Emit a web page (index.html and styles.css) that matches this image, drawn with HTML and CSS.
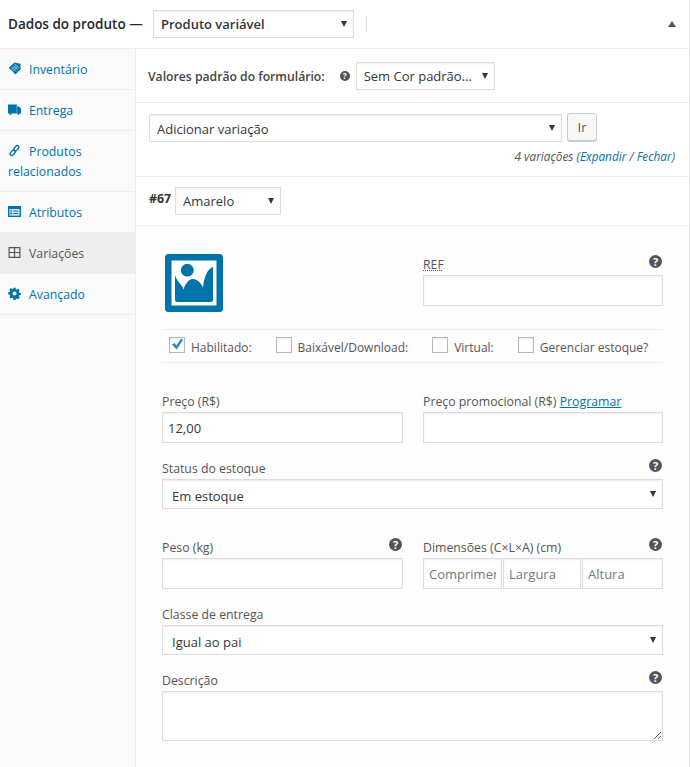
FILE: index.html
```html
<!DOCTYPE html>
<html lang="pt-BR">
<head>
    <meta charset="UTF-8">
    <meta name="viewport" content="width=device-width, initial-scale=1.0">
    <title>Dados do produto</title>
    <link rel="stylesheet" href="styles.css">
</head>
<body>
    <div class="panel">
        <header class="panel-head">
            <h2 class="panel-title">Dados do produto —</h2>
            <div class="select-wrap type-select">
                <select class="select-strong"><option>Produto variável</option></select>
            </div>
            <span class="head-divider"></span>
            <span class="collapse-arrow"></span>
        </header>

        <div class="product-data">
            <!-- Tabs -->
            <ul class="tabs">
                <li><a href="#">
                    <svg class="tab-icon" viewBox="0 0 13 13"><path d="M6.6 0.6l5.8 1.2 0.2 5.4-5.2 5.2-6.6-6.6z" fill="#0073aa"/><path d="M3.600 5l4.600 4.600M5.200 3.400l4.600 4.600M6.800 2l4 4M8.200 3.200l-5 5M9.600 4.600l-5 5" stroke="#cfe3ee" stroke-width="0.7" fill="none"/></svg>Inventário</a></li>
                <li><a href="#">
                    <svg class="tab-icon" viewBox="0 0 13 13"><path d="M0 1.400h8.800v9H0zM9.100 3.400h2.100L13 5.800v4.600H9.100z" fill="#0073aa"/><circle cx="2.6" cy="10.8" r="1.1" fill="#0073aa"/><circle cx="10.4" cy="10.8" r="1.1" fill="#0073aa"/></svg>Entrega</a></li>
                <li><a href="#">
                    <svg class="tab-icon" viewBox="0 0 13 13"><g fill="none" stroke="#0073aa" stroke-width="1.4"><rect x="6.6" y="1.2" width="3.4" height="6" rx="1.7" transform="rotate(42 8.3 4.2)"/><rect x="3" y="5.8" width="3.4" height="6" rx="1.7" transform="rotate(42 4.7 8.8)"/></g></svg>Produtos relacionados</a></li>
                <li><a href="#">
                    <svg class="tab-icon" viewBox="0 0 13 13"><path d="M0 1h13v11H0z" fill="#0073aa"/><path d="M1.400 4h10.200v6.600H1.400z" fill="#d8e8f1"/><path d="M2.200 5.200h2v1.400h-2zM2.200 7.800h2v1.400h-2zM5.200 5.400h5.400v1H5.200zM5.200 8h5.400v1H5.200z" fill="#0073aa"/></svg>Atributos</a></li>
                <li class="active"><a href="#">
                    <svg class="tab-icon" viewBox="0 0 13 13"><path d="M1.100 1.600h10.800v9.800H1.100zM6.500 1.600v9.800M1.100 6.500h10.800" fill="none" stroke="#555" stroke-width="1.2"/></svg>Variações</a></li>
                <li><a href="#">
                    <svg class="tab-icon" viewBox="0 0 13 13"><path d="M5.300 0.800h2.400l0.300 1.600 1.100 0.500 1.400-0.900 1.700 1.700-0.900 1.400 0.500 1.100 1.600 0.300v2.400l-1.600 0.300-0.500 1.100 0.900 1.400-1.700 1.700-1.400-0.900-1.100 0.500-0.300 1.600H5.300L5 12.200l-1.100-0.500-1.400 0.900-1.700-1.700 0.900-1.400L1.200 8.400-0.400 8.100V5.700L1.200 5.400l0.500-1.100-0.900-1.400 1.700-1.700 1.400 0.900L5 2.400z" transform="translate(0.6 0) scale(0.91)" fill="#0073aa"/><circle cx="6.5" cy="6.4" r="2" fill="#fafafa"/></svg>Avançado</a></li>
            </ul>

            <div class="main">
                <div class="row row-defaults">
                    <strong class="defaults-label">Valores padrão do formulário:</strong>
                    <span class="help help-small">?</span>
                    <div class="select-wrap defaults-select">
                        <select><option>Sem Cor padrão…</option></select>
                    </div>
                </div>

                <div class="row row-add">
                    <div class="add-line">
                        <div class="select-wrap add-select">
                            <select><option>Adicionar variação</option></select>
                        </div>
                        <button class="btn" type="button">Ir</button>
                    </div>
                    <p class="var-count">4 variações (<a href="#">Expandir</a> / <a href="#">Fechar</a>)</p>
                </div>

                <div class="row row-variation">
                    <strong class="var-id">#67</strong>
                    <div class="select-wrap color-select">
                        <select><option>Amarelo</option></select>
                    </div>
                </div>

                <div class="variation">
                    <div class="grid image-grid">
                        <svg class="thumb" viewBox="0 0 58 58">
                            <rect width="58" height="58" rx="3.5" fill="#0073aa"/>
                            <rect x="6.5" y="6.5" width="45" height="45" fill="#fff"/>
                            <circle cx="22.3" cy="16.2" r="6.4" fill="#0073aa"/>
                            <path d="M10 21C12 28 17 30 18.500 35.500C20 30 24 25 28 25C32 25 36 29 38 33.500C39 24 42 15 48 13V45.500Q48 48 45.500 48H12.500Q10 48 10 45.500Z" fill="#0073aa"/>
                        </svg>
                        <div class="field">
                            <label class="field-label"><abbr class="ref">REF</abbr><span class="help">?</span></label>
                            <input class="input" type="text">
                        </div>
                    </div>

                    <div class="options">
                        <label class="option"><input type="checkbox" checked>Habilitado:</label>
                        <label class="option"><input type="checkbox">Baixável/Download:</label>
                        <label class="option"><input type="checkbox">Virtual:</label>
                        <label class="option"><input type="checkbox">Gerenciar estoque?</label>
                    </div>

                    <div class="grid price-grid">
                        <div class="field">
                            <label class="field-label">Preço (R$)</label>
                            <input class="input" type="text" value="12,00">
                        </div>
                        <div class="field">
                            <label class="field-label"><span>Preço promocional (R$) <a href="#">Programar</a></span></label>
                            <input class="input" type="text">
                        </div>
                    </div>

                    <div class="field stock-field">
                        <label class="field-label">Status do estoque<span class="help">?</span></label>
                        <div class="select-wrap wide-select">
                            <select><option>Em estoque</option></select>
                        </div>
                    </div>

                    <div class="grid weight-grid">
                        <div class="field">
                            <label class="field-label">Peso (kg)<span class="help">?</span></label>
                            <input class="input" type="text">
                        </div>
                        <div class="field">
                            <label class="field-label">Dimensões (C×L×A) (cm)<span class="help">?</span></label>
                            <div class="dimensions">
                                <input class="input" type="text" placeholder="Comprimento">
                                <input class="input" type="text" placeholder="Largura">
                                <input class="input" type="text" placeholder="Altura">
                            </div>
                        </div>
                    </div>

                    <div class="field shipping-field">
                        <label class="field-label">Classe de entrega</label>
                        <div class="select-wrap wide-select">
                            <select><option>Igual ao pai</option></select>
                        </div>
                    </div>

                    <div class="field description-field">
                        <label class="field-label">Descrição<span class="help">?</span></label>
                        <textarea class="input description"></textarea>
                    </div>
                </div>
            </div>
        </div>
    </div>
</body>
</html>
```

FILE: styles.css
```css
/* General Styles */
* {
    box-sizing: border-box;
}

html, body {
    margin: 0;
    background-color: #ffffff;
}

body {
    font-family: 'Open Sans', sans-serif;
    font-size: 12.3px;
    color: #555;
}

a {
    color: #0073aa;
    text-decoration: none;
}

/* Panel */
.panel {
    width: 690px;
    height: 767px;
    overflow: hidden;
    border-right: 1px solid #e5e5e5;
    display: flex;
    flex-direction: column;
}

.panel-head {
    height: 49px;
    flex: none;
    display: flex;
    align-items: center;
    padding: 0 13px 1px 8px;
    border-bottom: 1px solid #eee;
}

.panel-title {
    width: 145px;
    margin: 0;
    font-size: 13.5px;
    font-weight: 600;
    color: #23282d;
    white-space: nowrap;
}

.head-divider {
    width: 1px;
    height: 16px;
    margin-left: 12px;
    background-color: #ddd;
}

.collapse-arrow {
    margin-left: auto;
    border-left: 4px solid transparent;
    border-right: 4px solid transparent;
    border-bottom: 6px solid #555;
}

/* Selects */
.select-wrap {
    position: relative;
}

.select-wrap::after {
    content: "";
    position: absolute;
    right: 7px;
    top: 50%;
    margin-top: -3px;
    border-left: 3.5px solid transparent;
    border-right: 3.5px solid transparent;
    border-top: 6px solid #32373c;
    pointer-events: none;
}

.select-wrap select {
    display: block;
    width: 100%;
    height: 100%;
    margin: 0;
    padding: 0 18px 0 7px;
    appearance: none;
    border: 1px solid #ddd;
    border-radius: 0;
    background-color: #fff;
    box-shadow: inset 0 1px 2px rgba(0, 0, 0, 0.07);
    font-family: inherit;
    font-size: 13px;
    color: #32373c;
}

.type-select {
    width: 201px;
    height: 28px;
}

.type-select .select-strong {
    padding-top: 1px;
    font-weight: 600;
}

.defaults-select {
    width: 139px;
    height: 28px;
}

.add-select {
    width: 413px;
    height: 28px;
}

.add-select select {
    padding-top: 1px;
}

.color-select {
    width: 106px;
    height: 28px;
}

.wide-select {
    height: 30px;
}

.wide-select select {
    padding: 3px 18px 0 9px;
}

/* Tabs */
.product-data {
    flex: 1;
    display: flex;
    min-height: 0;
}

.tabs {
    width: 136px;
    flex: none;
    margin: 0;
    padding: 0;
    list-style: none;
    background-color: #fafafa;
    border-right: 1px solid #eee;
}

.tabs li {
    border-bottom: 1px solid #eee;
}

.tabs a {
    display: block;
    padding: 11px 8px 9px;
    line-height: 20px;
}

.tabs .active {
    background-color: #eee;
}

.tabs .active a {
    color: #555;
}

.tab-icon {
    width: 13px;
    height: 13px;
    margin-right: 8px;
    vertical-align: -1px;
}

/* Rows above the variation */
.main {
    flex: 1;
    min-width: 0;
    display: flex;
    flex-direction: column;
}

.row {
    flex: none;
    border-bottom: 1px solid #eee;
}

.row-defaults {
    height: 54px;
    display: flex;
    align-items: center;
    padding: 1px 0 0 12px;
}

.defaults-label {
    font-size: 12.2px;
    font-weight: 600;
    color: #444;
}

.row-add {
    height: 74px;
    padding: 10px 14px 0 13px;
}

.add-line {
    display: flex;
    align-items: flex-start;
    gap: 5px;
}

.add-line .add-select {
    margin-top: 1px;
}

.btn {
    width: 30px;
    height: 28px;
    padding: 0;
    border: 1px solid #ccc;
    border-radius: 3px;
    background-color: #f7f7f7;
    box-shadow: 0 1px 0 #ccc;
    font-family: inherit;
    font-size: 13px;
    color: #555;
}

.var-count {
    margin: 6px 0 0;
    text-align: right;
    font-size: 11.8px;
    line-height: 16px;
    font-style: italic;
    color: #555;
}

.row-variation {
    height: 49px;
    display: flex;
    align-items: center;
    gap: 4px;
    padding: 0 0 1px 13px;
}

.var-id {
    position: relative;
    top: -2px;
    font-weight: 700;
    color: #333;
}

/* Variation form */
.variation {
    flex: 1;
    padding: 28px 26px 0 26px;
    background-color: #fdfdfd;
}

.grid {
    display: grid;
    grid-template-columns: 241px 240px;
    column-gap: 20px;
}

.thumb {
    display: block;
    width: 58px;
    height: 58px;
    margin-left: 3px;
}

.field-label {
    height: 21px;
    display: flex;
    align-items: center;
    justify-content: space-between;
    white-space: nowrap;
}

.field-label a {
    text-decoration: underline;
}

.ref {
    text-decoration: underline dotted;
}

.input {
    display: block;
    width: 100%;
    height: 31px;
    margin: 0;
    padding: 0 5px;
    border: 1px solid #ddd;
    border-radius: 0;
    background-color: #fff;
    box-shadow: inset 0 1px 2px rgba(0, 0, 0, 0.07);
    font-family: inherit;
    font-size: 13px;
    color: #32373c;
}

.input::placeholder {
    color: #72777c;
    opacity: 1;
}

.help {
    width: 13px;
    height: 13px;
    flex: none;
    margin: -6px 1px 0 0;
    border-radius: 50%;
    background-color: #555;
    color: #fff;
    font-size: 11px;
    font-weight: 700;
    line-height: 13px;
    text-align: center;
}

.help-small {
    width: 10px;
    height: 10px;
    margin: 0 6px 0 15px;
    font-size: 8px;
    line-height: 10px;
}

.options {
    height: 34px;
    margin-top: 17px;
    display: flex;
    align-items: center;
    gap: 24px;
    padding-left: 7px;
    border-top: 1px solid #eee;
    border-bottom: 1px solid #eee;
    font-size: 12px;
}

.option {
    display: flex;
    align-items: center;
    gap: 6px;
    padding-top: 2px;
    white-space: nowrap;
}

.option input {
    position: relative;
    width: 16px;
    height: 16px;
    margin: -5px 0 0;
    appearance: none;
    border: 1px solid #b4b9be;
    background-color: #fff;
    box-shadow: inset 0 1px 2px rgba(0, 0, 0, 0.1);
}

.option input:checked::before {
    content: "";
    position: absolute;
    left: 2px;
    top: 1px;
    width: 11px;
    height: 11px;
    background-color: #1e8cbe;
    clip-path: polygon(0 55%, 22% 40%, 40% 64%, 84% 0, 100% 14%, 42% 100%);
}

.price-grid {
    margin-top: 28px;
}

.stock-field {
    margin-top: 15px;
}

.weight-grid {
    margin-top: 28px;
}

.dimensions {
    display: grid;
    grid-template-columns: 79px 78px 81px;
    column-gap: 1px;
}

.shipping-field,
.description-field {
    margin-top: 15px;
}

.description {
    height: 50px;
}
```
